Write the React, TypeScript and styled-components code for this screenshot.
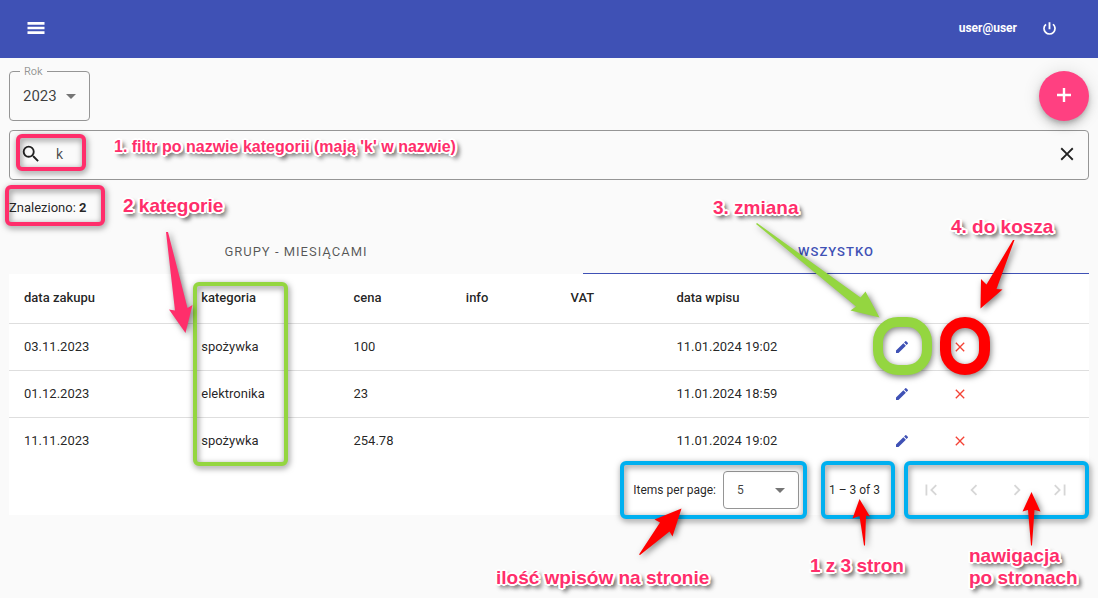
import React from "react";
import styled, { createGlobalStyle } from "styled-components";

const PINK = "#ff2e6b";
const GREEN = "#94d640";
const RED = "#ff0000";
const BLUE = "#00b0f0";

const GlobalStyle = createGlobalStyle`
  *, *::before, *::after { box-sizing: border-box; }
  html { background: #fafafa; }
  body {
    margin: 0;
    background: #fafafa;
    color: rgba(0, 0, 0, 0.87);
    font-family: Roboto, "Liberation Sans", sans-serif;
    font-size: 13px;
    line-height: 20px;
  }
  button, input, select { font: inherit; color: inherit; }
`;

const Page = styled.div`
  position: relative;
  min-height: 100vh;
  overflow: hidden;
`;

const Toolbar = styled.header`
  display: flex;
  align-items: center;
  justify-content: space-between;
  height: 58px;
  padding: 0 36px 2px 24px;
  background: #3f51b5;
  color: #fff;
`;

const UserArea = styled.div`
  display: flex;
  align-items: center;
  gap: 19px;
  font-size: 12px;
  font-weight: 700;
`;

const IconButton = styled.button<{ $w?: number; $color?: string }>`
  display: inline-flex;
  align-items: center;
  justify-content: center;
  flex: none;
  width: ${(p) => p.$w ?? 24}px;
  height: 24px;
  padding: 0;
  border: 0;
  background: none;
  color: ${(p) => p.$color ?? "inherit"};
  cursor: pointer;
  &:disabled { cursor: default; }
  & > svg { flex: none; }
`;

const Content = styled.main`
  padding: 13px 9px 0;
`;

const FilterBar = styled.div`
  display: flex;
  align-items: flex-start;
  justify-content: space-between;
`;

const SelectBox = styled.div<{ $w: number; $h: number }>`
  position: relative;
  width: ${(p) => p.$w}px;
  height: ${(p) => p.$h}px;
  border: 1px solid #959595;
  border-radius: 4px;
`;

const FloatingLabel = styled.label`
  position: absolute;
  top: -10px;
  left: 10px;
  padding: 0 4px;
  background: #fafafa;
  color: rgba(0, 0, 0, 0.42);
  font-size: 11px;
`;

const Select = styled.select<{ $size: number }>`
  width: 100%;
  height: 100%;
  padding: 0 13px 1px;
  border: 0;
  outline: 0;
  appearance: none;
  background: transparent;
  color: rgba(0, 0, 0, 0.76);
  font-size: ${(p) => p.$size}px;
`;

const Caret = styled.svg`
  position: absolute;
  top: 50%;
  right: 13px;
  width: 10px;
  height: 5px;
  margin-top: -2px;
  fill: #757575;
  pointer-events: none;
`;

const Fab = styled.button`
  display: flex;
  align-items: center;
  justify-content: center;
  width: 50px;
  height: 50px;
  padding: 0 0 2px;
  border: 0;
  border-radius: 50%;
  background: #ff4081;
  color: #fff;
  box-shadow: 0 3px 5px -1px rgba(0, 0, 0, 0.2), 0 6px 10px rgba(0, 0, 0, 0.14), 0 1px 18px rgba(0, 0, 0, 0.12);
`;

const SearchBox = styled.div`
  display: flex;
  align-items: center;
  height: 50px;
  margin-top: 9px;
  padding: 0 9px 2px;
  border: 1px solid #959595;
  border-radius: 4px;
`;

const SearchInput = styled.input`
  flex: 1;
  min-width: 0;
  padding: 0;
  margin-left: 13px;
  border: 0;
  outline: 0;
  background: transparent;
  color: rgba(0, 0, 0, 0.7);
  font-size: 14px;
`;

const Found = styled.p`
  margin: 18px 0 10px;
`;

const Tabs = styled.div`
  display: flex;
  height: 46px;
`;

const Tab = styled.button<{ $grow: number; $active?: boolean }>`
  flex: ${(p) => p.$grow} 1 0;
  padding: 2px 0 0;
  border: 0;
  border-bottom: 1px solid ${(p) => (p.$active ? "#3f51b5" : "transparent")};
  background: none;
  color: ${(p) => (p.$active ? "#3f51b5" : "rgba(0, 0, 0, 0.66)")};
  font-weight: ${(p) => (p.$active ? 500 : 400)};
  letter-spacing: 1px;
`;

const Card = styled.section`
  background: #fff;
`;

const Table = styled.table`
  width: 100%;
  border-collapse: collapse;
  table-layout: fixed;
`;

const Row = styled.tr<{ $head?: boolean; $last?: boolean }>`
  height: ${(p) => (p.$head ? 49 : 47)}px;
  border-bottom: ${(p) => (p.$last ? 0 : 1)}px solid #dedede;
`;

const HeadCell = styled.th`
  padding: 0;
  font-weight: 500;
  text-align: left;
  &:first-child { padding-left: 15px; }
`;

const Cell = styled.td`
  padding: 0;
  &:first-child { padding-left: 15px; }
  & > button { display: flex; width: 13px; }
`;

const Paginator = styled.div`
  display: flex;
  align-items: center;
  justify-content: flex-end;
  height: 51px;
  padding: 1px 8px 0 0;
  font-size: 12px;
`;

const PageSize = styled.div`
  display: flex;
  align-items: center;
  gap: 7px;
  margin-right: 30px;
`;

const PageButtons = styled.div`
  display: flex;
  margin-left: 29px;
`;

const Notes = styled.div`
  position: absolute;
  inset: 0;
  pointer-events: none;
`;

const Frame = styled.div<{
  $x: number; $y: number; $w: number; $h: number; $color: string; $border?: number; $radius?: number;
}>`
  position: absolute;
  left: ${(p) => p.$x}px;
  top: ${(p) => p.$y}px;
  width: ${(p) => p.$w}px;
  height: ${(p) => p.$h}px;
  border: ${(p) => p.$border ?? 4}px solid ${(p) => p.$color};
  border-radius: ${(p) => p.$radius ?? 6}px;
  filter: drop-shadow(1px 2px 3px rgba(0, 0, 0, 0.5));
`;

const Note = styled.p<{ $x: number; $y: number; $size?: number }>`
  position: absolute;
  left: ${(p) => p.$x}px;
  top: ${(p) => p.$y}px;
  margin: 0;
  color: ${PINK};
  font-family: "Liberation Sans", Arial, sans-serif;
  font-size: ${(p) => p.$size ?? 19}px;
  font-weight: 700;
  line-height: 22px;
  white-space: pre;
  text-shadow: 2px 0 #fff, -2px 0 #fff, 0 2px #fff, 0 -2px #fff, 1px 1px #fff, -1px 1px #fff, 1px -1px #fff,
    -1px -1px #fff, 2px 1px #fff, -2px 1px #fff, 2px -1px #fff, -2px -1px #fff, 3px 3px 4px rgba(0, 0, 0, 0.7),
    4px 4px 5px rgba(0, 0, 0, 0.4);
`;

const Arrows = styled.svg`
  position: absolute;
  top: 0;
  left: 0;
  overflow: visible;
  filter: drop-shadow(2px 2px 3px rgba(0, 0, 0, 0.5));
`;

const Icon = ({ d, size }: { d: string; size: number }) => (
  <svg width={size} height={size} viewBox="0 0 24 24" fill="currentColor" aria-hidden="true">
    <path d={d} />
  </svg>
);

const icons = {
  menu: "M3.500 4h17v2.700h-17zM3.500 8.700h17v2.600h-17zM3.500 13.300h17V16h-17z",
  power: "M13.300 3h-2.600v10h2.600V3zm4.530 2.170l-1.700 1.700A6.600 6.600 0 0 1 18.600 12a6.600 6.600 0 1 1-10.700-5.100L6.170 5.170A8.930 8.930 0 0 0 3 12a9 9 0 0 0 18 0c0-2.740-1.230-5.180-3.170-6.830z",
  add: "M19 13.200h-5.800V19h-2.400v-5.800H5v-2.400h5.800V5h2.400v5.800H19z",
  search: "M15.5 14h-.79l-.28-.27A6.47 6.47 0 0 0 16 9.5 6.5 6.5 0 1 0 9.5 16c1.61 0 3.09-.59 4.23-1.57l.27.28v.79l5 4.99L20.49 19l-4.99-5zm-6 0a4.5 4.5 0 1 1 0-9 4.5 4.5 0 0 1 0 9z",
  close: "M19 6.41L17.59 5 12 10.59 6.41 5 5 6.41 10.59 12 5 17.59 6.41 19 12 13.41 17.59 19 19 17.59 13.41 12z",
  edit: "M3 17.25V21h3.75L17.81 9.94l-3.75-3.75L3 17.25zM20.71 7.04a1 1 0 0 0 0-1.41l-2.34-2.34a1 1 0 0 0-1.41 0l-1.83 1.83 3.75 3.75 1.83-1.83z",
  first: "M18.41 16.59L13.82 12l4.59-4.59L17 6l-6 6 6 6zM6 6h2v12H6z",
  prev: "M15.41 7.41L14 6l-6 6 6 6 1.41-1.41L10.83 12z",
  next: "M10 6L8.59 7.41 13.17 12l-4.58 4.59L10 18l6-6z",
  last: "M5.59 7.41L10.18 12l-4.59 4.59L7 18l6-6-6-6zM16 6h2v12h-2z",
};

const columns = ["17.8%", "14.1%", "10.4%", "9.7%", "9.8%", "20.3%", "5.4%", "12.5%"];
const headings = ["data zakupu", "kategoria", "cena", "info", "VAT", "data wpisu", "", ""];
const purchases = [
  { date: "03.11.2023", category: "spożywka", price: "100", created: "11.01.2024 19:02" },
  { date: "01.12.2023", category: "elektronika", price: "23", created: "11.01.2024 18:59" },
  { date: "11.11.2023", category: "spożywka", price: "254.78", created: "11.01.2024 19:02" },
];

const DropArrow = () => (
  <Caret viewBox="0 0 10 5" aria-hidden="true">
    <path d="M0 0h10L5 5z" />
  </Caret>
);

export default function App() {
  return (
    <Page>
      <GlobalStyle />
      <Toolbar>
        <IconButton aria-label="Menu">
          <svg width="24" height="20" viewBox="0 0 24 20" fill="currentColor" aria-hidden="true">
            <path d={icons.menu} />
          </svg>
        </IconButton>
        <UserArea>
          <span>user@user</span>
          <IconButton $w={26} aria-label="Wyloguj">
            <Icon d={icons.power} size={17} />
          </IconButton>
        </UserArea>
      </Toolbar>

      <Content>
        <FilterBar>
          <SelectBox $w={81} $h={50}>
            <FloatingLabel htmlFor="year">Rok</FloatingLabel>
            <Select id="year" $size={15} defaultValue="2023">
              <option>2023</option>
            </Select>
            <DropArrow />
          </SelectBox>
          <Fab aria-label="Dodaj">
            <Icon d={icons.add} size={24} />
          </Fab>
        </FilterBar>

        <SearchBox>
          <IconButton as="span">
            <Icon d={icons.search} size={22} />
          </IconButton>
          <SearchInput aria-label="Szukaj" defaultValue="k" />
          <IconButton aria-label="Wyczyść">
            <Icon d={icons.close} size={22} />
          </IconButton>
        </SearchBox>

        <Found>
          Znaleziono: <b>2</b>
        </Found>

        <Tabs role="tablist">
          <Tab role="tab" aria-selected={false} $grow={574}>GRUPY - MIESIĄCAMI</Tab>
          <Tab role="tab" aria-selected $grow={506} $active>WSZYSTKO</Tab>
        </Tabs>

        <Card>
          <Table>
            <colgroup>
              {columns.map((width, i) => (
                <col key={i} style={{ width }} />
              ))}
            </colgroup>
            <thead>
              <Row $head>
                {headings.map((h, i) => (
                  <HeadCell key={i}>{h}</HeadCell>
                ))}
              </Row>
            </thead>
            <tbody>
              {purchases.map((p, i) => (
                <Row key={p.date} $last={i === purchases.length - 1}>
                  <Cell>{p.date}</Cell>
                  <Cell>{p.category}</Cell>
                  <Cell>{p.price}</Cell>
                  <Cell />
                  <Cell />
                  <Cell>{p.created}</Cell>
                  <Cell>
                    <IconButton $color="#3f51b5" aria-label="Zmień">
                      <Icon d={icons.edit} size={16} />
                    </IconButton>
                  </Cell>
                  <Cell>
                    <IconButton $color="#f44336" aria-label="Usuń">
                      <Icon d={icons.close} size={16} />
                    </IconButton>
                  </Cell>
                </Row>
              ))}
            </tbody>
          </Table>

          <Paginator>
            <PageSize>
              <label htmlFor="page-size">Items per page:</label>
              <SelectBox $w={76} $h={38}>
                <Select id="page-size" $size={12} defaultValue="5">
                  <option>5</option>
                </Select>
                <DropArrow />
              </SelectBox>
            </PageSize>
            <span>1 – 3 of 3</span>
            <PageButtons>
              {(["first", "prev", "next", "last"] as const).map((name) => (
                <IconButton key={name} $w={43} $color="rgba(0, 0, 0, 0.16)" aria-label={name} disabled>
                  <Icon d={icons[name]} size={22} />
                </IconButton>
              ))}
            </PageButtons>
          </Paginator>
        </Card>
      </Content>

      <Notes>
        <Frame $x={16} $y={134} $w={70} $h={37} $color={PINK} />
        <Frame $x={5} $y={185} $w={100} $h={41} $color={PINK} />
        <Frame $x={193} $y={282} $w={95} $h={184} $color={GREEN} />
        <Frame $x={873} $y={317} $w={59} $h={58} $color={GREEN} $border={10} $radius={25} />
        <Frame $x={940} $y={317} $w={50} $h={58} $color={RED} $border={11} $radius={25} />
        <Frame $x={620} $y={461} $w={187} $h={58} $color={BLUE} />
        <Frame $x={821} $y={461} $w={74} $h={58} $color={BLUE} />
        <Frame $x={904} $y={461} $w={185} $h={58} $color={BLUE} />
        <Arrows width="1098" height="598" aria-hidden="true">
          <path fill={PINK} d="M166 232h2L187.500 308L192.500 305L185.500 333L169 309.500L175 310.500z" />
          <path fill={GREEN} d="M757 223L860.500 297.500L865.500 291.500L879.500 317.500L850.500 310.500L856 306.500L756 224z" />
          <path fill={RED} d="M1013 240h1.500L996.500 289L1002.500 289.500L980.500 308.500L981 279L986.500 284.500z" />
          <path fill={RED} d="M639 554.500L660 522.500L654.500 519.500L681.500 508.500L672.500 536.500L669.500 531.500L640 555z" />
          <path fill={RED} d="M864 545.500L859.500 516L852.500 518.500L859.500 499L870 516.500L866 515.500L865 545.500z" />
          <path fill={RED} d="M1031 545.500L1028 510L1022.500 511.500L1031.500 492L1040.500 511.500L1034.500 510L1032 545.500z" />
        </Arrows>
        <Note $x={114} $y={136} $size={16}>1. filtr po nazwie kategorii (mają 'k' w nazwie)</Note>
        <Note $x={123} $y={195}>2 kategorie</Note>
        <Note $x={713} $y={197}>3. zmiana</Note>
        <Note $x={951} $y={216}>4. do kosza</Note>
        <Note $x={496} $y={567}>ilość wpisów na stronie</Note>
        <Note $x={810} $y={555}>1 z 3 stron</Note>
        <Note $x={969} $y={545}>{"nawigacja\npo stronach"}</Note>
      </Notes>
    </Page>
  );
}
